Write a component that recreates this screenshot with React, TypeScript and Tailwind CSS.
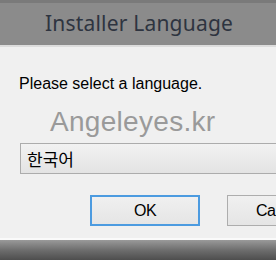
export default function App() {
  return (
    <div className="w-[276px] h-[260px] overflow-hidden flex flex-col bg-[#f0f0f0]" style={{ fontFamily: '"Open Sans", "Noto Sans", "Liberation Sans", sans-serif' }}>
      <div className="h-[3px] bg-[#7a7a7a]" />
      <div className="h-[42px] bg-[#8b8b8b] flex items-center justify-center">
        <span className="text-[21px] text-[#2e3440] tracking-[0.2px] pb-[1px] pl-[2px]" style={{ fontFamily: '"Noto Sans", "Open Sans", sans-serif' }}>Installer Language</span>
      </div>
      <div className="h-[2px] bg-[#dcdcdc]" />
      <div className="flex-1 flex flex-col bg-[#f0f0f0] overflow-hidden">
        <div className="pl-[19px] pt-[28px] text-[16px] leading-[18px] text-black tracking-[0px]" style={{ fontFamily: '"Liberation Sans", sans-serif' }}>
          Please select a language.
        </div>
        <div className="pl-[50px] mt-[13px] text-[28px] leading-[32px] text-[#9a9a9a] tracking-[0.3px]" style={{ fontFamily: '"Liberation Sans", sans-serif' }}>
          Angeleyes.kr
        </div>
        <div className="ml-[20px] mt-[5px] h-[31px] border border-[#acacac] border-r-0 bg-gradient-to-b from-[#f2f2f2] to-[#e3e3e3] flex items-center pl-[6px]">
          <span className="text-[17px] text-black" style={{ fontFamily: '"Noto Sans CJK KR", sans-serif' }}>한국어</span>
        </div>
        <div className="flex mt-[21px]">
          <div className="ml-[90px] shrink-0 w-[110px] h-[31px] border-[2px] border-[#4c9be0] bg-gradient-to-b from-[#f0f0f0] to-[#e5e5e5] flex items-center justify-center text-[16px] text-black tracking-[-0.5px]" style={{ fontFamily: '"Liberation Sans", sans-serif' }}>
            OK
          </div>
          <div className="ml-[27px] shrink-0 w-[110px] h-[31px] border border-[#adadad] bg-gradient-to-b from-[#f0f0f0] to-[#e5e5e5] flex items-center pl-[28px] text-[16px] text-black tracking-[-0.5px] whitespace-nowrap" style={{ fontFamily: '"Liberation Sans", sans-serif' }}>
            Cancel
          </div>
        </div>
        <div className="flex-1" />
      </div>
      <div className="h-[2px] bg-[#fafafa]" />
      <div className="h-[20px] bg-gradient-to-b from-[#9a9a9a] via-[#6e6e6e] to-[#4e4e4e]" />
    </div>
  );
}
